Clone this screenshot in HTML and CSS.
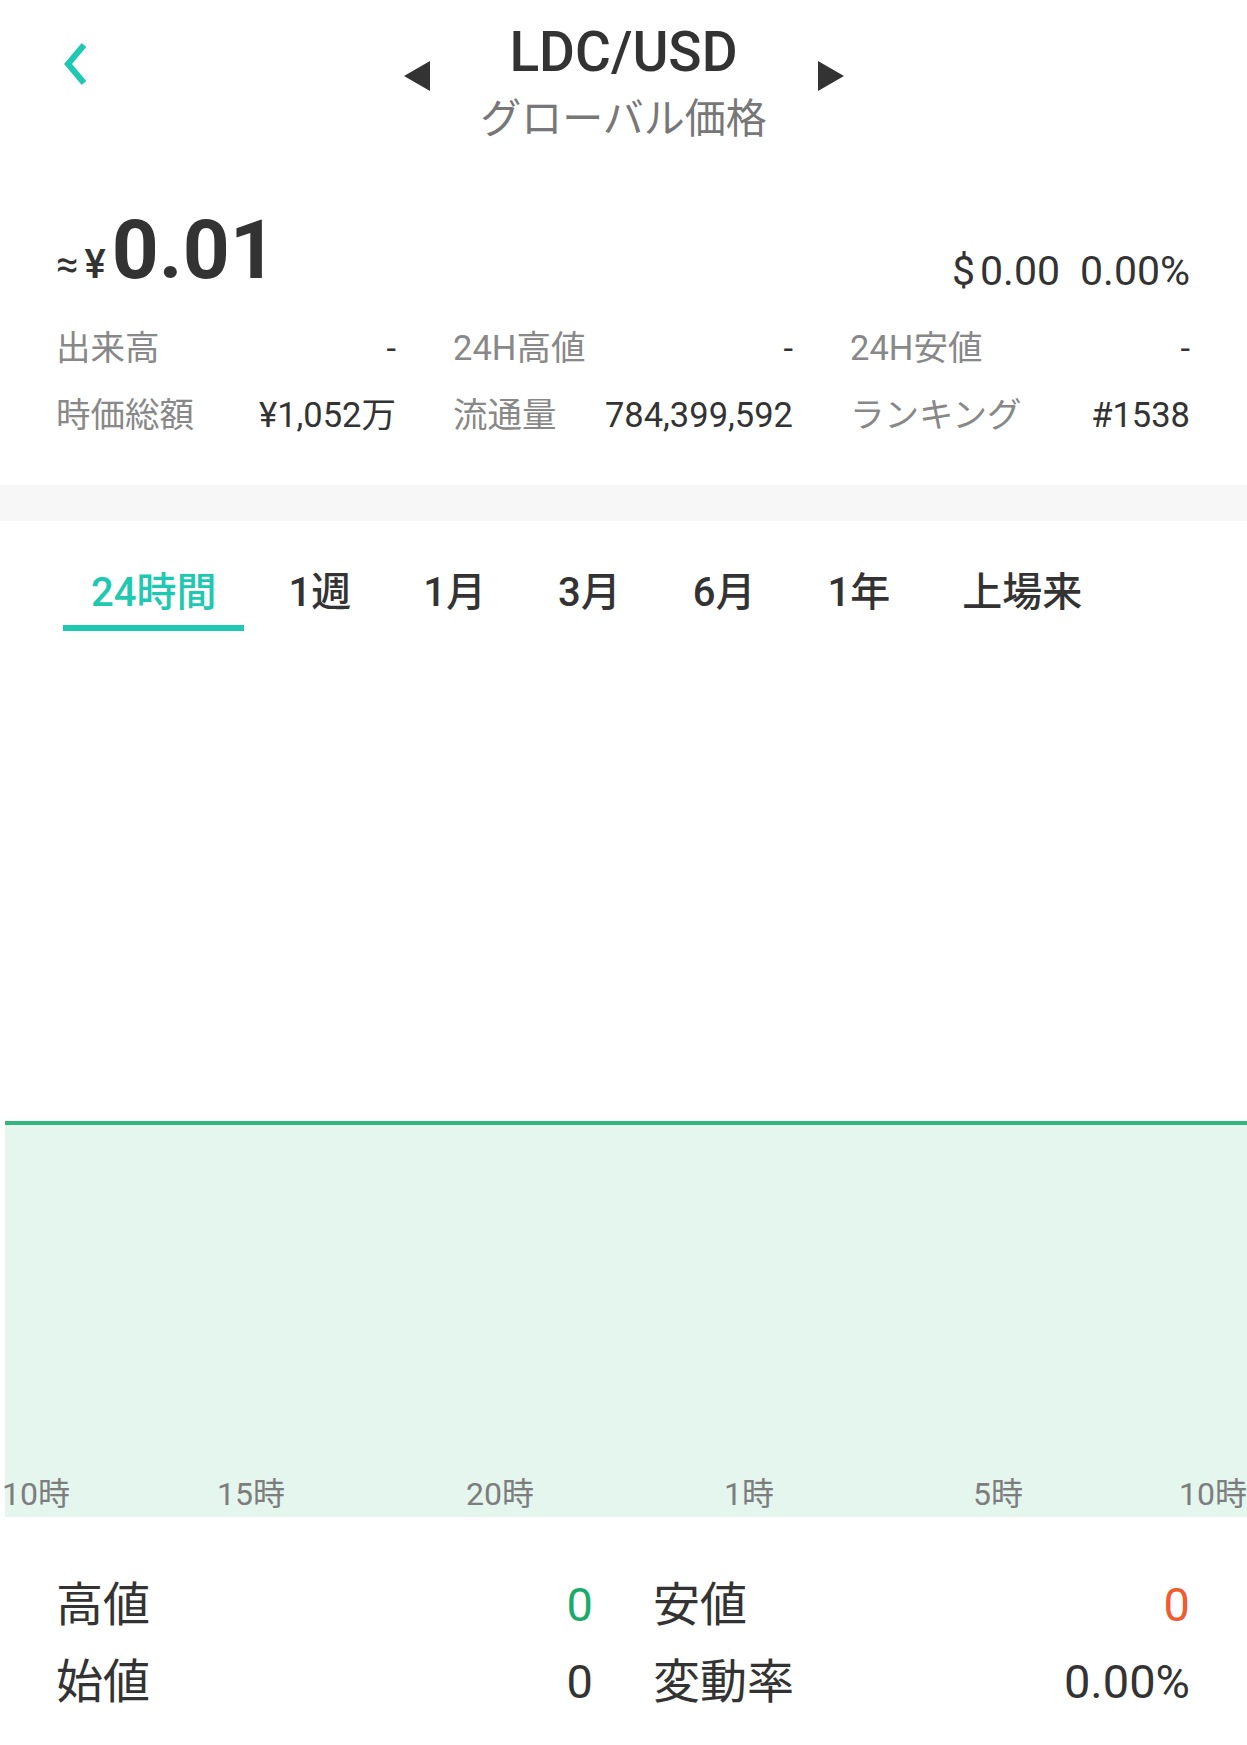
FILE: index.html
```html
<!DOCTYPE html>
<html lang="ja">
<head>
  <meta charset="UTF-8">
  <meta name="viewport" content="width=device-width, initial-scale=1.0">
  <title>LDC/USD - グローバル価格</title>
  <link rel="stylesheet" href="styles.css">
</head>
<body>
  <header class="top-bar">
    <div class="back">
      <svg width="26" height="44" viewBox="0 0 26 44">
        <polyline points="22,3 6,22 22,41" fill="none" stroke="#1ec8b1" stroke-width="6"/>
      </svg>
    </div>
    <div class="pair">
      <svg class="arrow" width="28" height="30" viewBox="0 0 28 30">
        <polygon points="27,0 27,30 1,15" fill="#333"/>
      </svg>
      <div class="pair-title">
        <div class="pair-name">LDC/USD</div>
        <div class="pair-sub">グローバル価格</div>
      </div>
      <svg class="arrow" width="28" height="30" viewBox="0 0 28 30">
        <polygon points="1,0 1,30 27,15" fill="#333"/>
      </svg>
    </div>
    <div></div>
  </header>

  <section class="price">
    <div class="price-main"><span class="approx">≈</span><span class="yen">¥</span><span class="big">0.01</span></div>
    <div class="price-sub"><span class="usd"><span class="dollar">$</span>0.00</span><span>0.00%</span></div>
  </section>

  <section class="stats">
    <div class="stat"><span class="label">出来高</span><span class="value">-</span></div>
    <div class="stat"><span class="label">24H高値</span><span class="value">-</span></div>
    <div class="stat"><span class="label">24H安値</span><span class="value">-</span></div>
    <div class="stat"><span class="label">時価総額</span><span class="value">¥1,052万</span></div>
    <div class="stat"><span class="label">流通量</span><span class="value">784,399,592</span></div>
    <div class="stat"><span class="label">ランキング</span><span class="value">#1538</span></div>
  </section>

  <div class="divider"></div>

  <nav class="tabs">
    <span class="tab active">24時間</span>
    <span class="tab">1週</span>
    <span class="tab">1月</span>
    <span class="tab">3月</span>
    <span class="tab">6月</span>
    <span class="tab">1年</span>
    <span class="tab">上場来</span>
  </nav>

  <div class="chart">
    <div class="chart-space"></div>
    <div class="chart-area">
      <div class="axis">
        <span>10時</span>
        <span>15時</span>
        <span>20時</span>
        <span>1時</span>
        <span>5時</span>
        <span>10時</span>
      </div>
    </div>
  </div>

  <section class="summary">
    <div class="stat"><span>高値</span><span class="up">0</span></div>
    <div class="stat"><span>安値</span><span class="down">0</span></div>
    <div class="stat"><span>始値</span><span>0</span></div>
    <div class="stat"><span>変動率</span><span>0.00%</span></div>
  </section>
</body>
</html>
```

FILE: styles.css
```css
body {
  margin: 0;
  padding: 0;
  background-color: white;
  color: #333;
  font-family: Roboto, "Noto Sans CJK JP", sans-serif;
}

/* Header */
.top-bar {
  display: grid;
  grid-template-columns: 1fr auto 1fr;
  align-items: start;
  padding-top: 22px;
}

.back {
  padding-left: 62px;
  padding-top: 20px;
}

.back svg {
  display: block;
}

.pair {
  display: flex;
  align-items: flex-start;
}

.arrow {
  display: block;
  margin-top: 39px;
}

.pair-title {
  width: 386px;
  text-align: center;
}

.pair-name {
  font-size: 55px;
  font-weight: 500;
  line-height: 60px;
  color: #333;
}

.pair-sub {
  margin-top: 12px;
  font-size: 41px;
  line-height: 50px;
  color: #777;
}

/* Price */
.price {
  display: flex;
  justify-content: space-between;
  align-items: flex-end;
  padding: 0 57px 0 56px;
  margin-top: 65px;
}

.price-main {
  font-size: 82px;
  line-height: 82px;
  color: #333;
}

.approx {
  font-size: 40px;
  line-height: 1;
  margin-right: 6px;
}

.yen {
  font-size: 40px;
  line-height: 1;
  font-weight: 500;
  margin-right: 6px;
}

.big {
  font-weight: 700;
}

.price-sub {
  display: flex;
  gap: 20px;
  font-size: 41px;
  line-height: 40px;
  color: #333;
}

.dollar {
  margin-right: 5px;
}

/* Stats */
.stats {
  display: grid;
  grid-template-columns: repeat(3, 1fr);
  column-gap: 57px;
  padding: 0 57px 0 56px;
  margin-top: 24px;
  font-size: 34.5px;
  line-height: 67px;
}

.stat {
  display: flex;
  justify-content: space-between;
  white-space: nowrap;
}

.stats .label {
  color: #888;
}

.stats .value {
  color: #333;
}

.divider {
  height: 36px;
  margin-top: 36px;
  background-color: #f7f7f7;
}

/* Tabs */
.tabs {
  display: flex;
  padding: 47px 0 0 55px;
}

.tab {
  margin: 0 8px;
  padding: 0 28px 7px;
  font-size: 40px;
  font-weight: 500;
  line-height: 50px;
  color: #333;
  border-bottom: 6px solid transparent;
}

.tab.active {
  color: #1ec8b1;
  border-bottom-color: #1ec8b1;
}

/* Chart */
.chart-space {
  height: 490px;
}

.chart-area {
  margin-left: 5px;
  height: 389px;
  padding-bottom: 3px;
  border-top: 4px solid #33b57e;
  background-color: #e4f6ee;
  display: flex;
  flex-direction: column;
  justify-content: flex-end;
}

.axis {
  display: flex;
  margin-left: -3px;
  font-size: 32px;
  line-height: 40px;
  color: #7d7d7d;
}

.axis span {
  flex: 1;
  text-align: center;
  white-space: nowrap;
}

.axis span:first-child {
  flex: 0 0 124.5px;
  text-align: left;
}

.axis span:last-child {
  flex: 0 0 124.5px;
  text-align: right;
}

/* Summary */
.summary {
  display: grid;
  grid-template-columns: 1fr 1fr;
  column-gap: 60px;
  padding: 0 57px 0 56px;
  margin-top: 49px;
  font-size: 47px;
  line-height: 77px;
  color: #333;
}

.summary .up {
  color: #1aab6b;
}

.summary .down {
  color: #f05b2f;
}
```
